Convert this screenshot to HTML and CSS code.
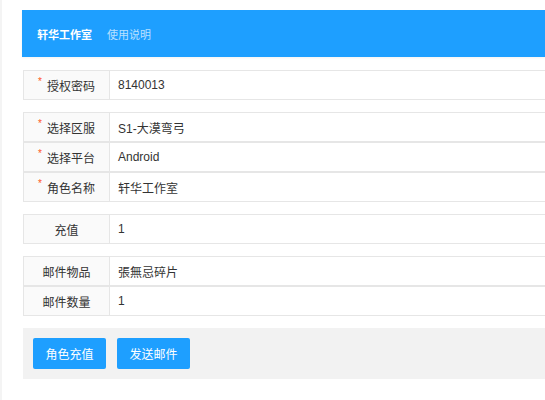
FILE: index.html
```html
<!DOCTYPE html>
<html lang="zh-CN">
  <head>
    <meta charset="UTF-8" />
    <meta name="viewport" content="width=device-width, initial-scale=1.0" />
    <title>轩华工作室</title>
    <link rel="stylesheet" href="styles.css">
  </head>
  <body>
    <div class="page">
      <div class="header">
        <span class="header-logo">轩华工作室</span>
        <a href="#" class="header-link">使用说明</a>
      </div>

      <form class="form">
        <div class="form-block">
          <div class="form-row">
            <label class="form-label"><span class="req">*</span>授权密码</label>
            <div class="form-value">8140013</div>
          </div>
        </div>

        <div class="form-block">
          <div class="form-row">
            <label class="form-label"><span class="req">*</span>选择区服</label>
            <div class="form-value">S1-大漠弯弓</div>
          </div>
          <div class="form-row">
            <label class="form-label"><span class="req">*</span>选择平台</label>
            <div class="form-value">Android</div>
          </div>
          <div class="form-row">
            <label class="form-label"><span class="req">*</span>角色名称</label>
            <div class="form-value">轩华工作室</div>
          </div>
        </div>

        <div class="form-block">
          <div class="form-row">
            <label class="form-label">充值</label>
            <div class="form-value">1</div>
          </div>
        </div>

        <div class="form-block">
          <div class="form-row">
            <label class="form-label">邮件物品</label>
            <div class="form-value">張無忌碎片</div>
          </div>
          <div class="form-row">
            <label class="form-label">邮件数量</label>
            <div class="form-value">1</div>
          </div>
        </div>

        <div class="form-actions">
          <button type="button" class="btn">角色充值</button>
          <button type="button" class="btn">发送邮件</button>
        </div>
      </form>
    </div>
  </body>
</html>
```

FILE: styles.css
```css
body {
  margin: 0;
  font-family: "Liberation Sans", "Noto Sans CJK SC", sans-serif;
  font-size: 12px;
  color: #333;
  background-color: #f4f4f4;
}

.page {
  margin-left: 2px;
  min-height: 400px;
  background-color: #fff;
  padding: 10px 0 0 20px;
  box-sizing: border-box;
}

/* Header */
.header {
  display: flex;
  align-items: center;
  height: 47px;
  padding-left: 15px;
  background-color: #1e9fff;
  box-shadow: 0 1px 2px rgba(0, 0, 0, 0.05);
}

.header-logo {
  color: #fff;
  font-weight: bold;
  font-size: 11px;
}

.header-link {
  margin-left: 15px;
  font-size: 11px;
  color: rgba(255, 255, 255, 0.7);
  text-decoration: none;
}

/* Form */
.form {
  margin: 13px 0 0 1px;
}

.form-block {
  margin-bottom: 12px;
}

.form-row {
  display: flex;
  height: 28px;
  border: 1px solid #e6e6e6;
  border-right: none;
}

.form-label {
  width: 85px;
  flex-shrink: 0;
  display: flex;
  align-items: center;
  justify-content: center;
  background-color: #fafafa;
  border-right: 1px solid #e6e6e6;
}

.req {
  color: #ff5722;
  font-size: 10px;
  margin-right: 5px;
  position: relative;
  top: -4px;
}

.form-value {
  display: flex;
  align-items: center;
  padding-left: 8px;
}

/* Buttons */
.form-actions {
  display: flex;
  gap: 11px;
  padding: 10px;
  background-color: #f2f2f2;
}

.btn {
  width: 73px;
  height: 31px;
  border: none;
  border-radius: 2px;
  background-color: #1e9fff;
  color: #fff;
  font-family: inherit;
  font-size: 12px;
  cursor: pointer;
}
```
